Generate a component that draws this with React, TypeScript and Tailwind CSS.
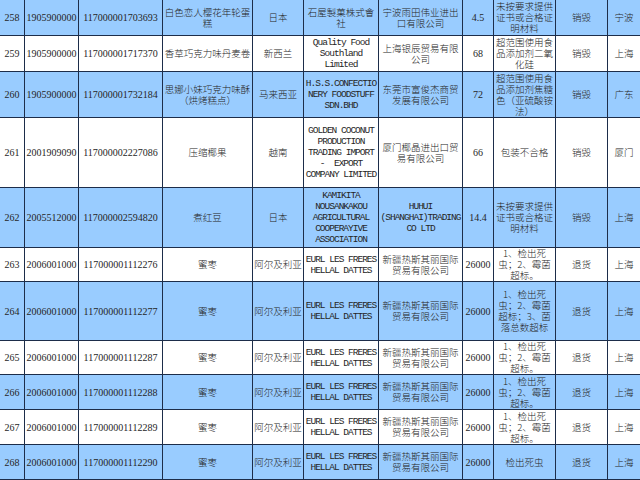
import React from "react";

type Cell = string[];
type Row = { h: string; blue: boolean; cells: Cell[] };

const widths = [
  "w-[25px]",
  "w-[54px]",
  "w-[84px]",
  "w-[90px]",
  "w-[51px]",
  "w-[75px]",
  "w-[84px]",
  "w-[31px]",
  "w-[62px]",
  "w-[52px]",
  "w-[32px]",
];

const numCols = [0, 1, 2, 7];

const r263 = ["1、检出死", "虫；2、霉菌", "超标。"];
const eurl = ["EURL LES FRERES", "HELLAL DATTES"];
const xj = ["新疆热斯其丽国际", "贸易有限公司"];

const rows: Row[] = [
  {
    h: "h-[36px]",
    blue: true,
    cells: [["258"], ["1905900000"], ["117000001703693"], ["白色恋人樱花年轮蛋", "糕"], ["日本"], ["石屋製菓株式會", "社"], ["宁波雨田伟业进出", "口有限公司"], ["4.5"], ["未按要求提供", "证书或合格证", "明材料"], ["销毁"], ["宁波"]],
  },
  {
    h: "h-[36px]",
    blue: false,
    cells: [["259"], ["1905900000"], ["117000001717370"], ["香草巧克力味丹麦卷"], ["新西兰"], ["Quality Food", "Southland", "Limited"], ["上海银辰贸易有限", "公司"], ["68"], ["超范围使用食", "品添加剂二氧", "化硅"], ["销毁"], ["上海"]],
  },
  {
    h: "h-[46px]",
    blue: true,
    cells: [["260"], ["1905900000"], ["117000001732184"], ["思娜小妹巧克力味酥", "（烘烤糕点）"], ["马来西亚"], ["H.S.S.CONFECTIO", "NERY FOODSTUFF", "SDN.BHD"], ["东莞市富俊杰商贸", "发展有限公司"], ["72"], ["超范围使用食", "品添加剂焦糖", "色（亚硫酸铵", "法）"], ["销毁"], ["广东"]],
  },
  {
    h: "h-[70px]",
    blue: false,
    cells: [["261"], ["2001909090"], ["117000002227086"], ["压缩椰果"], ["越南"], ["GOLDEN COCONUT", "PRODUCTION", "TRADING IMPORT", "-  EXPORT", "COMPANY LIMITED"], ["厦门椰晶进出口贸", "易有限公司"], ["66"], ["包装不合格"], ["销毁"], ["厦门"]],
  },
  {
    h: "h-[60px]",
    blue: true,
    cells: [["262"], ["2005512000"], ["117000002594820"], ["煮红豆"], ["日本"], ["KAMIKITA", "NOUSANKAKOU", "AGRICULTURAL", "COOPERAYIVE", "ASSOCIATION"], ["HUHUI", "(SHANGHAI)TRADING", "CO LTD"], ["14.4"], ["未按要求提供", "证书或合格证", "明材料"], ["销毁"], ["上海"]],
  },
  {
    h: "h-[34px]",
    blue: false,
    cells: [["263"], ["2006001000"], ["117000001112276"], ["蜜枣"], ["阿尔及利亚"], eurl, xj, ["26000"], r263, ["退货"], ["上海"]],
  },
  {
    h: "h-[59px]",
    blue: true,
    cells: [["264"], ["2006001000"], ["117000001112277"], ["蜜枣"], ["阿尔及利亚"], eurl, xj, ["26000"], ["1、检出死", "虫；2、霉菌", "超标；3、菌", "落总数超标"], ["退货"], ["上海"]],
  },
  {
    h: "h-[34px]",
    blue: false,
    cells: [["265"], ["2006001000"], ["117000001112287"], ["蜜枣"], ["阿尔及利亚"], eurl, xj, ["26000"], r263, ["退货"], ["上海"]],
  },
  {
    h: "h-[35px]",
    blue: true,
    cells: [["266"], ["2006001000"], ["117000001112288"], ["蜜枣"], ["阿尔及利亚"], eurl, xj, ["26000"], r263, ["退货"], ["上海"]],
  },
  {
    h: "h-[35px]",
    blue: false,
    cells: [["267"], ["2006001000"], ["117000001112289"], ["蜜枣"], ["阿尔及利亚"], eurl, xj, ["26000"], r263, ["退货"], ["上海"]],
  },
  {
    h: "h-[35px]",
    blue: true,
    cells: [["268"], ["2006001000"], ["117000001112290"], ["蜜枣"], ["阿尔及利亚"], eurl, xj, ["26000"], ["检出死虫"], ["退货"], ["上海"]],
  },
];

function isLatin(s: string) {
  return /^[\x20-\x7e]+$/.test(s);
}

export default function App() {
  return (
    <div className="w-[640px] h-[480px] overflow-hidden bg-white text-[#262626]">
      <div className="flex flex-col w-[700px]">
        {rows.map((row, ri) => (
          <div
            key={ri}
            className={`flex shrink-0 ${row.h} ${row.blue ? "bg-[#99ccff]" : "bg-white"}`}
          >
            {row.cells.map((cell, ci) => {
              const num = numCols.includes(ci);
              const latin = !num && cell.every(isLatin);
              const font = num
                ? "font-['Liberation_Serif',serif] text-[10px]"
                : latin
                ? "font-['Liberation_Mono',monospace] text-[9.5px] tracking-[-1px]"
                : "font-['Noto_Sans_CJK_SC','Noto_Sans',sans-serif] text-[9.5px] font-light";
              return (
                <div
                  key={ci}
                  className={`${widths[ci]} shrink-0 h-full box-border border-b border-[#1d2d4a] ${
                    ci < 10 ? "border-r" : ""
                  } flex flex-col items-center justify-center text-center whitespace-nowrap overflow-hidden ${font}`}
                >
                  {cell.map((line, li) => (
                    <span key={li} className="block whitespace-pre leading-[11px]">
                      {line}
                    </span>
                  ))}
                </div>
              );
            })}
          </div>
        ))}
      </div>
    </div>
  );
}
